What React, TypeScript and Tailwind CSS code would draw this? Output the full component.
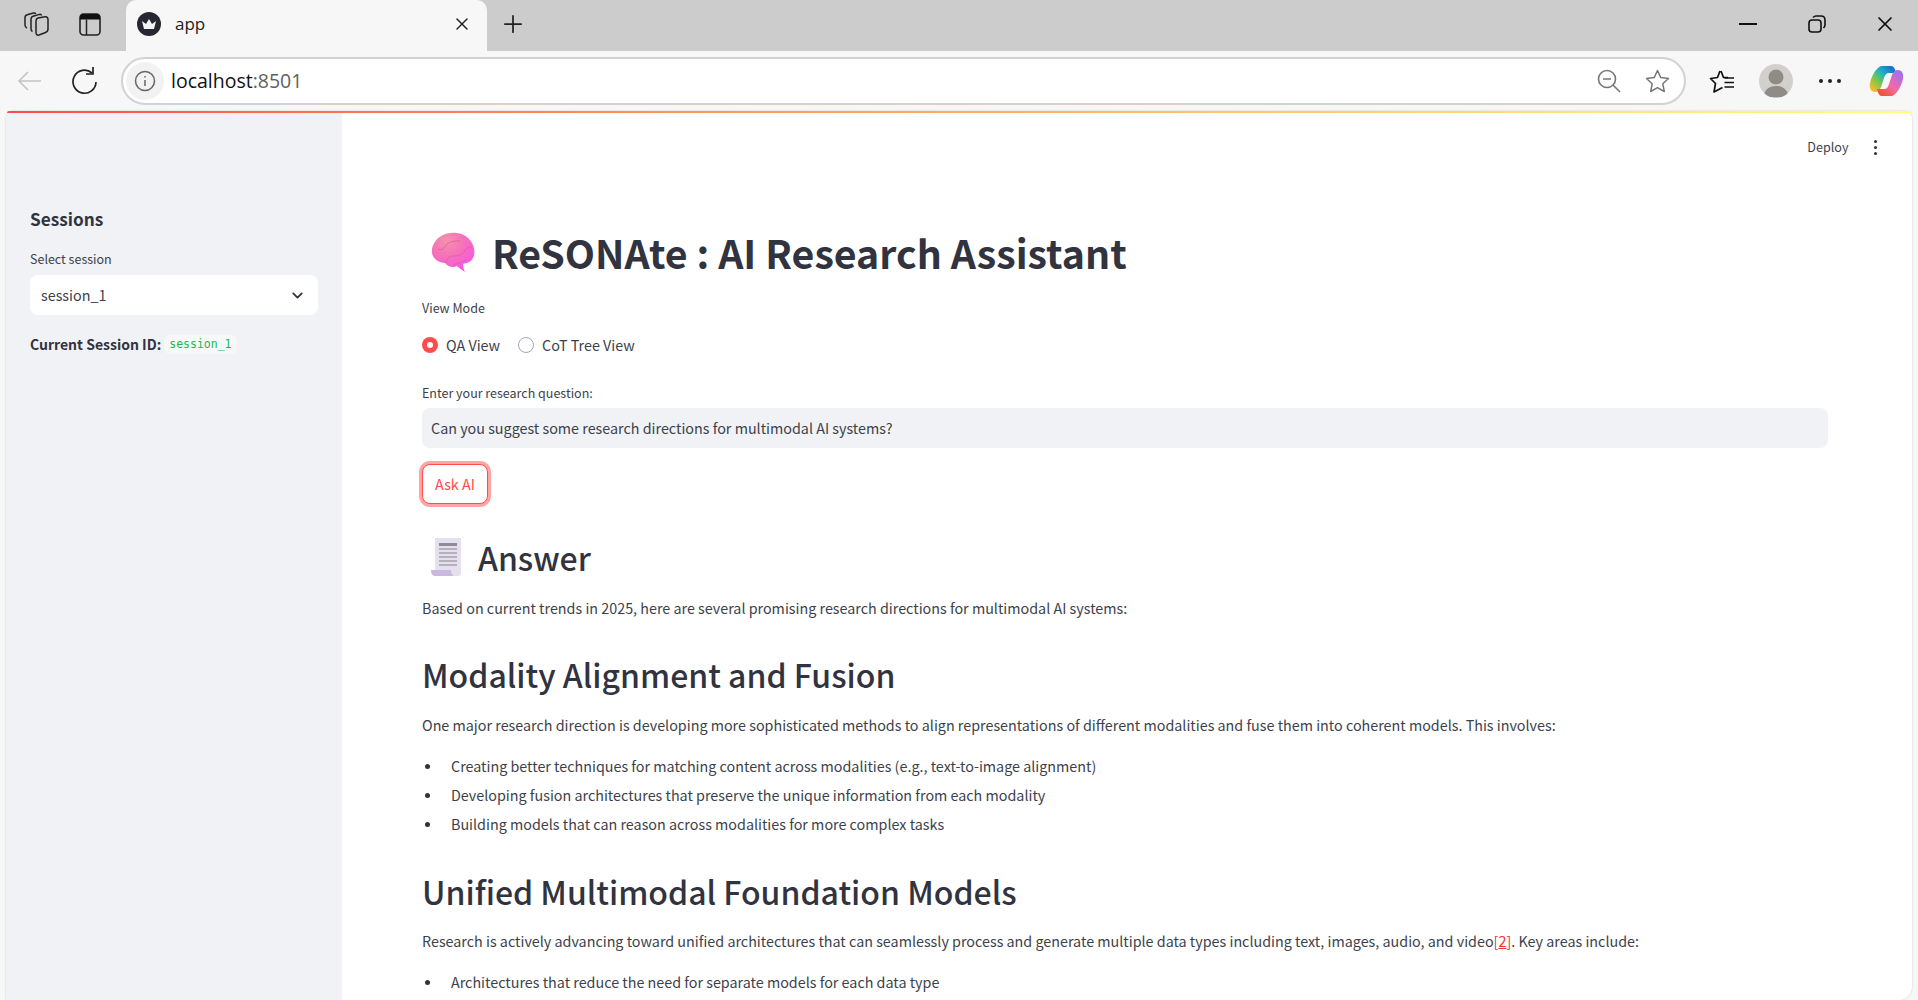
import { ChevronDown, Plus, X } from 'lucide-react';

const uiFont = { fontFamily: '"Noto Sans CJK JP", "Noto Sans", sans-serif' };

const BrainIcon = () => (
  <svg width="44" height="41" viewBox="0 0 44 41" fill="none">
    <defs>
      <radialGradient id="brainFill" cx="0.35" cy="0.2" r="0.85">
        <stop stopColor="#f592ad" />
        <stop offset="0.45" stopColor="#f573b8" />
        <stop offset="1" stopColor="#f854e6" />
      </radialGradient>
    </defs>
    <path
      d="M1 21C0 14 5 6 12 3C20 -1 32 0 38 7C43 12 45 20 42 26C40 30 36 31 32 32C32 35 33 38 34 40C31 38 28 36 26 34C22 36 17 35 14 31C8 31 2 27 1 21Z"
      fill="url(#brainFill)"
    />
    <path
      d="M7 17C11 19 13 16 16 12C20 9 24 9 29 9M14 31C17 28 16 25 21 24C26 24 32 24 34 18C36 16 38 15 41 15M22 34C25 31 30 31 35 28"
      stroke="#dc5a9c"
      strokeOpacity="0.7"
      strokeWidth="1"
    />
  </svg>
);

const ScrollIcon = () => (
  <svg width="34" height="40" viewBox="0 0 34 40" fill="none">
    <path d="M5 1H31V36C31 38 30 39 28 39H6C5 39 5 38 5 36Z" fill="#e6e0ee" />
    <path d="M1 33H21C21 37 23 39 25 39H5C2 39 1 36 1 33Z" fill="#c9b9de" />
    <path d="M9 6H27V9H9Z" fill="#8f8b98" />
    <path d="M9 12H27M9 16H27M9 20H27M9 24H27M9 28H27" stroke="#a5a1ae" strokeWidth="1.6" />
  </svg>
);

const CopilotIcon = () => (
  <svg width="35" height="32" viewBox="0 0 35 32" fill="none">
    <defs>
      <linearGradient id="copA" x1="3" y1="24" x2="24" y2="2" gradientUnits="userSpaceOnUse">
        <stop stopColor="#f6b92b" />
        <stop offset="0.3" stopColor="#7cc84a" />
        <stop offset="0.6" stopColor="#20b4c0" />
        <stop offset="1" stopColor="#1468d8" />
      </linearGradient>
      <linearGradient id="copB" x1="13" y1="31" x2="33" y2="8" gradientUnits="userSpaceOnUse">
        <stop stopColor="#f4502c" />
        <stop offset="0.45" stopColor="#f06aa8" />
        <stop offset="1" stopColor="#a070f0" />
      </linearGradient>
    </defs>
    <path d="M12 1H22C25 1 26 4 27 8H20C17 8 16 10 15 13L12 22C11 25 9 27 6 27C2 27 0 23 1 18C3 10 7 3 12 1Z" fill="url(#copA)" />
    <path d="M23 31H13C10 31 9 28 8 24H15C18 24 19 22 20 19L23 10C24 7 26 5 29 5C33 5 35 9 34 14C32 22 28 29 23 31Z" fill="url(#copB)" />
  </svg>
);

const BrowserChrome = () => (
  <>
    <div className="flex h-[51px] shrink-0 items-center bg-[#cccccc]">
      <div className="flex w-[126px] items-center pb-[3px]">
        <svg className="ml-[24px]" width="25" height="24" viewBox="0 0 25 24" fill="none" stroke="#222" strokeWidth="1.5" strokeLinejoin="round">
          <path d="M14 6L21 4.8C23 4.6 24 5.6 24 7.5V17C24 19 23 20 21.5 20.5L15 23C13 23.5 12 22.5 12 20.5V9C12 7.5 12.5 6.4 14 6Z" />
          <path d="M8.5 19.5C7.4 19 7 18 7 16.5V7C7 5.5 7.8 4.6 9 4.2L15.5 2.4C16.6 2.2 17.3 2.6 17.6 3.4" />
          <path d="M3 16C1.8 15.5 1 14.5 1 13V5.5C1 4 2 3 3.2 2.7L9.5 1C10.6 0.8 11.4 1.2 11.8 2" />
        </svg>
        <svg className="ml-[30px]" width="22" height="23" viewBox="0 0 22 23" fill="none">
          <rect x="1" y="1" width="20" height="21" rx="3.5" stroke="#222" strokeWidth="1.6" />
          <path d="M1 4.5C1 2.5 2.5 1 4.5 1H17.5C19.5 1 21 2.5 21 4.5V6.5H1Z" fill="#111" />
          <path d="M7.5 6.5V22" stroke="#222" strokeWidth="1.5" />
        </svg>
      </div>
      <div className="flex h-full w-[361px] items-center rounded-t-[10px] bg-[#f7f7f7] pr-[15px] pb-[3px] pl-[11px]">
        <svg width="24" height="24" viewBox="0 0 24 24">
          <circle cx="12" cy="12" r="12" fill="#262730" />
          <path d="M5 9L9 12L12 7L15 12L19 9L17 17H7Z" fill="#f4f4f4" />
        </svg>
        <span className="ml-[14px] text-[17px] text-[#222]" style={{ fontFamily: '"Open Sans", sans-serif' }}>app</span>
        <X className="ml-auto" size={20} color="#222" strokeWidth={1.8} />
      </div>
      <Plus className="mb-[3px] ml-[12px]" size={28} color="#222" strokeWidth={1.5} />
      <div className="ml-auto flex items-center pb-[3px]">
        <div className="h-[2px] w-[18px] bg-[#111]" />
        <svg className="ml-[51px]" width="18" height="18" viewBox="0 0 18 18" fill="none" stroke="#111" strokeWidth="1.6">
          <rect x="1" y="5" width="12" height="12" rx="3" />
          <path d="M5 2.5C6 1.5 7 1 8 1H13C15.5 1 17 2.5 17 5V10C17 11 16.5 12 15.5 13" />
        </svg>
        <X className="mr-[21px] ml-[47px]" size={24} color="#111" strokeWidth={1.7} />
      </div>
    </div>
    <div className="flex h-[60px] shrink-0 items-center bg-[#f7f7f7]">
      <svg className="ml-[17px]" width="25" height="22" viewBox="0 0 25 22" fill="none" stroke="#c4c4c4" strokeWidth="1.6">
        <path d="M24 11H2M11 2L2 11L11 20" />
      </svg>
      <svg className="ml-[29px]" width="26" height="28" viewBox="0 0 26 28" fill="none" stroke="#222" strokeWidth="1.7">
        <path d="M21 6A11.5 11.5 0 1 0 25 15" />
        <path d="M22 0V7H15" />
      </svg>
      <div className="ml-[24px] flex h-[48px] w-[1565px] items-center rounded-full border-2 border-[#d2d2d2] bg-white pr-[14px] pl-[3px]">
        <div className="flex size-[38px] items-center justify-center rounded-full bg-[#f2f2f2]">
          <svg width="22" height="22" viewBox="0 0 22 22" fill="none" stroke="#666" strokeWidth="1.5">
            <circle cx="11" cy="11" r="9.5" />
            <path d="M11 10V16M11 6V7.6" />
          </svg>
        </div>
        <span className="ml-[7px] text-[19.5px] text-[#111]" style={{ fontFamily: '"Open Sans", sans-serif' }}>
          localhost<span className="text-[#5f5f5f]">:8501</span>
        </span>
        <svg className="ml-auto" width="24" height="24" viewBox="0 0 24 24" fill="none" stroke="#777" strokeWidth="1.6">
          <circle cx="10" cy="10" r="8.5" />
          <path d="M6 10H14M16 16L23 23" />
        </svg>
        <svg className="ml-[24px]" width="25" height="24" viewBox="0 0 25 24" fill="none" stroke="#777" strokeWidth="1.5">
          <path d="M12.5 1.5L15.8 8.6L23.5 9.5L17.8 14.8L19.3 22.5L12.5 18.6L5.7 22.5L7.2 14.8L1.5 9.5L9.2 8.6Z" strokeLinejoin="round" />
        </svg>
      </div>
      <svg className="ml-[23px]" width="26" height="25" viewBox="0 0 26 25" fill="none" stroke="#111" strokeWidth="1.7" strokeLinejoin="round">
        <path d="M12 2L14.5 8.5H19M11 2L8.5 8.5L1.5 9.5L6.5 14.5L5 23L13.5 18.5" />
        <path d="M15.5 9H25M15.5 13.5H25M15.5 18H25" />
      </svg>
      <div className="ml-[24px] flex size-[34px] items-center justify-center overflow-hidden rounded-full bg-[#d2d0cd]">
        <svg width="34" height="34" viewBox="0 0 34 34">
          <circle cx="17" cy="13" r="7.5" fill="#8f8b87" />
          <path d="M5 31C6 25 11 22 17 22C23 22 28 25 29 31C25 34 9 34 5 31Z" fill="#8f8b87" />
        </svg>
      </div>
      <div className="ml-[26px] flex items-center gap-[5px]">
        <div className="size-[4px] rounded-full bg-[#222]" />
        <div className="size-[4px] rounded-full bg-[#222]" />
        <div className="size-[4px] rounded-full bg-[#222]" />
      </div>
      <div className="ml-[28px]">
        <CopilotIcon />
      </div>
    </div>
  </>
);

const Sidebar = () => (
  <aside className="flex w-[336px] shrink-0 flex-col bg-[#f0f2f6] pt-[96px] pr-[24px] pl-[24px] text-[#3d3f4b]">
    <h2 className="text-[17.2px] leading-[24px] font-semibold text-[#31333f]">Sessions</h2>
    <p className="mt-[20px] text-[12.5px] leading-[16px]">Select session</p>
    <div className="mt-[8px] flex h-[40px] items-center justify-between rounded-[8px] bg-white px-[11px] text-[14.33px]">
      <span>session_1</span>
      <ChevronDown size={17} strokeWidth={2.6} className="mr-[1px] text-[#31333f]" />
    </div>
    <p className="mt-[18px] flex items-center text-[14px] leading-[20px] font-semibold text-[#31333f]">
      Current Session ID:
      <code className="mt-[2px] ml-[3px] rounded-[6px] bg-[#f6f8fa] px-[5px] text-[11.5px] leading-[19px] font-normal text-[#1cb84e]" style={{ fontFamily: '"DejaVu Sans Mono", monospace' }}>
        session_1
      </code>
    </p>
  </aside>
);

const Bullet = ({ children }: { children: string }) => (
  <li className="flex text-[14.33px] leading-[20px]">
    <span className="mt-[8px] ml-[3px] size-[5px] shrink-0 rounded-full bg-[#31333f]" />
    <span className="ml-[21px]">{children}</span>
  </li>
);

const MainPanel = () => (
  <main className="relative min-w-0 flex-1 overflow-hidden bg-white pt-[109px] pr-[84px] pl-[80px] text-[#3d3f4b]">
    <div className="absolute top-[27px] right-[35px] flex items-center">
      <span className="text-[12.6px]">Deploy</span>
      <div className="ml-[25px] flex flex-col gap-[2.5px]">
        <div className="size-[3.5px] rounded-full bg-[#31333f]" />
        <div className="size-[3.5px] rounded-full bg-[#31333f]" />
        <div className="size-[3.5px] rounded-full bg-[#31333f]" />
      </div>
    </div>

    <h1 className="flex h-[64px] items-center text-[39.3px] font-bold tracking-normal text-[#31333f]">
      <span className="mt-[1px] ml-[9px]"><BrainIcon /></span>
      <span className="ml-[17px]">ReSONAte : AI Research Assistant</span>
    </h1>

    <p className="mt-[16px] text-[12.5px] leading-[16px]">View Mode</p>
    <div className="mt-[19px] flex h-[20px] items-center text-[14.33px]">
      <span className="flex size-[16px] items-center justify-center rounded-full bg-[#ff4b4b]">
        <span className="size-[6px] rounded-full bg-white" />
      </span>
      <span className="ml-[8px]">QA View</span>
      <span className="ml-[18px] size-[16px] rounded-full border border-[#a3a8b4] bg-white" />
      <span className="ml-[8px]">CoT Tree View</span>
    </div>

    <p className="mt-[30px] text-[12.5px] leading-[16px]">Enter your research question:</p>
    <div className="mt-[7px] flex h-[40px] items-center rounded-[8px] bg-[#f0f2f6] px-[9px] text-[14.33px]">
      Can you suggest some research directions for multimodal AI systems?
    </div>
    <button className="mt-[16px] block h-[40px] w-[66px] rounded-[8px] border border-[#ff4b4b] bg-white text-[14.33px] text-[#ff4b4b] shadow-[0_0_0_3px_rgba(255,75,75,0.5)]">
      Ask AI
    </button>

    <h2 className="mt-[30px] flex h-[46px] items-center text-[32px] font-medium text-[#31333f]">
      <span className="ml-[8px]"><ScrollIcon /></span>
      <span className="ml-[14px]">Answer</span>
    </h2>

    <p className="mt-[18px] text-[14.33px] leading-[20px]">
      Based on current trends in 2025, here are several promising research directions for multimodal AI systems:
    </p>

    <h3 className="mt-[34px] text-[32px] leading-[44px] font-medium text-[#31333f]">Modality Alignment and Fusion</h3>
    <p className="mt-[19px] text-[14.33px] leading-[20px]">
      One major research direction is developing more sophisticated methods to align representations of different modalities and fuse them into coherent models. This involves:
    </p>
    <ul className="mt-[21px] flex flex-col gap-[9px]">
      <Bullet>Creating better techniques for matching content across modalities (e.g., text-to-image alignment)</Bullet>
      <Bullet>Developing fusion architectures that preserve the unique information from each modality</Bullet>
      <Bullet>Building models that can reason across modalities for more complex tasks</Bullet>
    </ul>

    <h3 className="mt-[35px] text-[32px] leading-[44px] font-medium text-[#31333f]">Unified Multimodal Foundation Models</h3>
    <p className="mt-[18px] text-[14.33px] leading-[20px]">
      Research is actively advancing toward unified architectures that can seamlessly process and generate multiple data types including text, images, audio, and video
      <span className="text-[#ff2b2b]">[<span className="underline">2</span>]</span>. Key areas include:
    </p>
    <ul className="mt-[21px]">
      <Bullet>Architectures that reduce the need for separate models for each data type</Bullet>
    </ul>
  </main>
);

export default function App() {
  return (
    <div className="flex h-[1000px] w-[1918px] flex-col overflow-hidden bg-[#f7f7f7]" style={uiFont}>
      <BrowserChrome />
      <div className="relative flex min-h-0 flex-1">
        <div className="absolute top-0 right-[6px] left-[7px] z-10 h-[2px] rounded-t-[8px] bg-gradient-to-r from-[#ff4b4b] to-[#ffff7d]" />
        <div className="ml-[6px] flex w-[1906px] overflow-hidden rounded-t-[8px] rounded-br-[14px] shadow-[0_0_2px_rgba(0,0,0,0.2)]">
          <Sidebar />
          <MainPanel />
        </div>
      </div>
    </div>
  );
}
